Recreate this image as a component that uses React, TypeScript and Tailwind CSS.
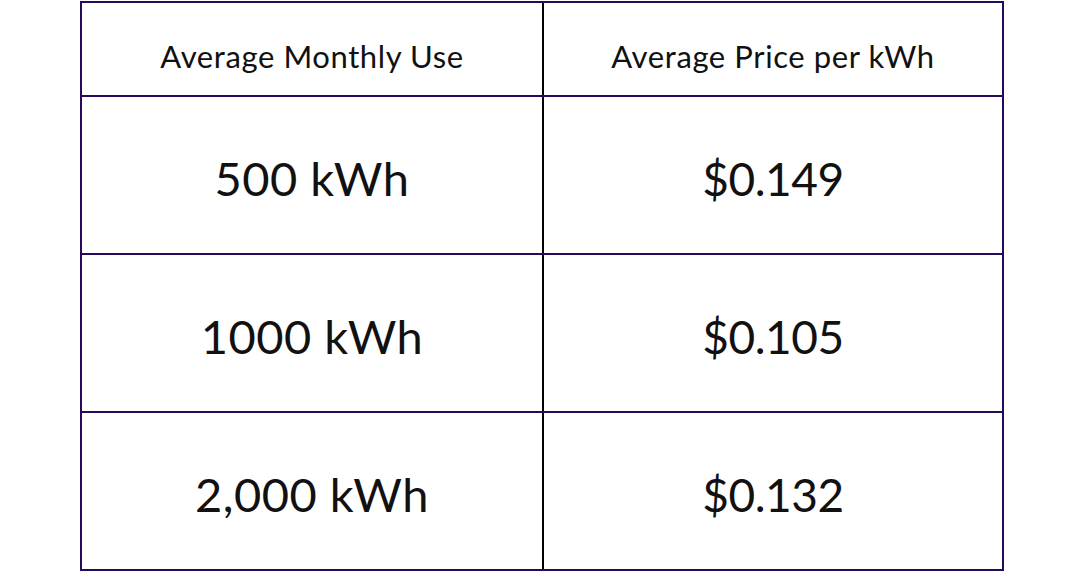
import React from 'react';

const rows = [
  { use: '500 kWh', price: '$0.149' },
  { use: '1000 kWh', price: '$0.105' },
  { use: '2,000 kWh', price: '$0.132' },
];

const App = () => {
  return (
    <div className="w-[1080px] h-[572px] bg-white pt-px" style={{ fontFamily: 'Lato, "Open Sans", sans-serif' }}>
      <div className="ml-[80px] w-[924px] border-2 border-[#25095c] text-[#111111]">
        {/* header */}
        <div className="grid grid-cols-[462px_458px] h-[92px]">
          <div className="border-r-2 border-black flex items-center justify-center pt-[14px] text-[31px] tracking-[0.6px]">
            Average Monthly Use
          </div>
          <div className="flex items-center justify-center pt-[14px] text-[31px] tracking-[0.6px]">
            Average Price per kWh
          </div>
        </div>

        {rows.map((row) => (
          <div key={row.use} className="grid grid-cols-[462px_458px] border-t-2 border-[#25095c]">
            <div className="border-r-2 border-black h-[156px] flex items-center justify-center pt-[6px] text-[47px] tracking-[0.5px]">
              {row.use}
            </div>
            <div className="h-[156px] flex items-center justify-center pt-[6px] text-[46px] tracking-[-0.5px]">
              {row.price}
            </div>
          </div>
        ))}
      </div>
    </div>
  );
};

export default App;
